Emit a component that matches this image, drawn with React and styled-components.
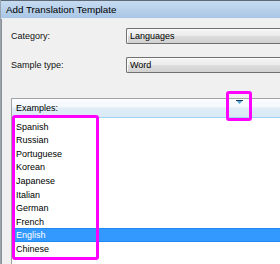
import React from 'react';
import styled, { createGlobalStyle } from 'styled-components';

const GlobalStyle = createGlobalStyle`
  html, body {
    margin: 0;
    padding: 0;
    background: #f0f0f0;
  }
  #root {
    width: 280px;
    height: 264px;
    overflow: hidden;
  }
`;

const languages = ['Spanish', 'Russian', 'Portuguese', 'Korean', 'Japanese', 'Italian', 'German', 'French', 'English', 'Chinese'];

export default function App () {
    return (
        <>
            <GlobalStyle />
            <Window>
                <TitleBar>Add Translation Template</TitleBar>
                <Body>
                    <FieldRow>
                        <Label>Category:</Label>
                        <Combo>Languages</Combo>
                    </FieldRow>
                    <FieldRow>
                        <Label>Sample type:</Label>
                        <Combo>Word</Combo>
                    </FieldRow>
                    <ListPanel>
                        <ListHeader>
                            Examples:
                            <SortArrow width="7" height="4" viewBox="0 0 7 4">
                                <path d="M0 0 H7 L3.5 4 Z" fill="#4aa3df" />
                                <path d="M0 0 H7 V1 H0 Z" fill="#1c3a5a" />
                            </SortArrow>
                        </ListHeader>
                        <Items>
                            {languages.map(lang => (
                                <Item key={lang} selected={lang === 'English'}>{lang}</Item>
                            ))}
                        </Items>
                    </ListPanel>
                </Body>
                {/* magenta call-out boxes drawn over the dialog */}
                <Mark $x={11} $y={115} $w={87} $h={145} />
                <Mark $x={225} $y={91} $w={26} $h={30} />
            </Window>
        </>
    );
}

const Window = styled.div`
    position: relative;
    width: 280px;
    height: 264px;
    box-sizing: border-box;
    display: flex;
    flex-direction: column;
    border-left: 1px solid #9aa4ae;
    font-family: "Liberation Sans", Arial, sans-serif;
    color: #000;
`;

const TitleBar = styled.div`
    height: 19px;
    box-sizing: border-box;
    flex: none;
    display: flex;
    align-items: center;
    padding-left: 5px;
    font-size: 9.8px;
    color: #000;
    border-top: 1px solid #5d6b78;
    border-bottom: 1px solid #e8eef5;
    background: linear-gradient(to bottom, #c6dbf1, #a9c6e4);
`;

const Body = styled.div`
    flex: 1;
    display: flex;
    flex-direction: column;
    padding: 9px 0 0 2px;
    background: #f0f0f0;
    border-left: 1px solid #8b8f94;
    min-height: 0;
`;

const FieldRow = styled.div`
    display: grid;
    grid-template-columns: 115px 1fr;
    align-items: center;
    height: 16px;
    margin-bottom: 13px;
    padding-left: 7px;
`;

const Label = styled.span`
    font-size: 9px;
    color: #111;
`;

const Combo = styled.div`
    height: 16px;
    box-sizing: border-box;
    display: flex;
    align-items: center;
    padding-left: 3px;
    margin-right: -4px;
    font-size: 9px;
    border: 1px solid #707070;
    border-right: none;
    border-radius: 2px 0 0 2px;
    background: linear-gradient(to bottom, #f4f4f4 0%, #ececec 48%, #dcdcdc 52%, #d2d2d2 100%);
    box-shadow: inset 1px 1px 0 #fcfcfc;
`;

const ListPanel = styled.div`
    flex: 1;
    margin-top: 12px;
    margin-left: 7px;
    display: flex;
    flex-direction: column;
    background: #fff;
    border-top: 1px solid #a3a3a3;
    border-left: 1px solid #a3a3a3;
`;

const ListHeader = styled.div`
    position: relative;
    height: 19px;
    flex: none;
    box-sizing: border-box;
    display: flex;
    align-items: center;
    padding-left: 4px;
    font-size: 9px;
    background: linear-gradient(to bottom, #fbfdff 0%, #f3f8fc 45%, #e0edf7 50%, #d9e9f5 100%);
    border-bottom: 1px solid #9fd5f3;
`;

const SortArrow = styled.svg`
    position: absolute;
    left: 224px;
    top: 1px;
`;

const Items = styled.div`
    padding-top: 2px;
    display: flex;
    flex-direction: column;
`;

const Item = styled.div`
    height: 13.55px;
    flex: none;
    box-sizing: border-box;
    display: flex;
    align-items: center;
    padding-left: 4px;
    font-size: 9px;
    color: ${p => p.selected ? '#fff' : '#000'};
    background: ${p => p.selected ? '#3399ff' : 'transparent'};
    border-top: 1px solid ${p => p.selected ? '#1f8af5' : 'transparent'};
    border-bottom: 1px solid ${p => p.selected ? '#1f8af5' : 'transparent'};
`;

const Mark = styled.div`
    position: absolute;
    left: ${p => p.$x}px;
    top: ${p => p.$y}px;
    width: ${p => p.$w}px;
    height: ${p => p.$h}px;
    box-sizing: border-box;
    border: 3px solid #ff00ff;
    border-radius: 3px;
    pointer-events: none;
`;
